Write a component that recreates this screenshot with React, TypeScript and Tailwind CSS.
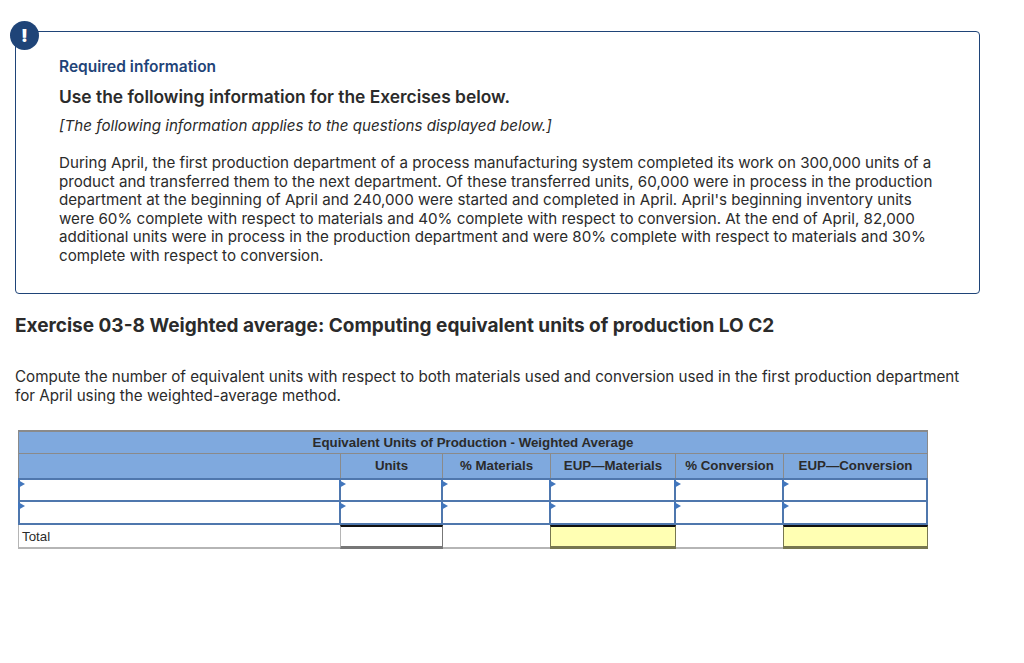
const cols = ["w-[323px]", "w-[102px]", "w-[108px]", "w-[125px]", "w-[108px]", "w-[144px]"];

function Marker() {
  return <span className="absolute left-[-2px] top-0 z-10 h-0 w-0 border-y-[4px] border-l-[7px] border-y-transparent border-l-[#4276bc]" />;
}

function InputRow({ first }: { first?: boolean }) {
  return (
    <div className={first ? "flex h-[24px]" : "flex h-[23px]"}>
      {cols.map((c, i) => (
        <div key={c} className={`${c} relative border-r-2 border-b-2 border-[#4f77ad] bg-white ${first ? "border-t-2" : ""} ${i === 0 ? "border-l-2" : ""}`}>
          <Marker />
        </div>
      ))}
    </div>
  );
}

const heads = ["", "Units", "% Materials", "EUP—Materials", "% Conversion", "EUP—Conversion"];

export default function App() {
  return (
    <div className="h-[663px] w-[1024px] overflow-hidden bg-white font-['Inter','Liberation_Sans',sans-serif] text-[#2b2b2b]">
      <div className="px-[15px] pt-[31px]">
        <div className="relative h-[263px] w-[965px] rounded-[4px] border border-[#1f4478] pl-[43px] pt-[25px]">
          <div className="absolute left-[-6px] top-[-11px] flex h-[29px] w-[29px] items-center justify-center rounded-full bg-[#1f4478] text-[18px] font-black text-white">!</div>
          <p className="text-[15.5px] leading-[20px] font-semibold text-[#1f4478]">Required information</p>
          <p className="mt-[10px] text-[17.4px] leading-[20px] font-semibold">Use the following information for the Exercises below.</p>
          <p className="mt-[9px] text-[15.15px] leading-[20px] italic">[The following information applies to the questions displayed below.]</p>
          <p className="mt-[18px] w-[890px] text-[15.15px] leading-[18.6px]">
            During April, the first production department of a process manufacturing system completed its work on 300,000 units of a product and transferred them to the next department. Of these transferred units, 60,000 were in process in the production department at the beginning of April and 240,000 were started and completed in April. April's beginning inventory units were 60% complete with respect to materials and 40% complete with respect to conversion. At the end of April, 82,000 additional units were in process in the production department and were 80% complete with respect to materials and 30% complete with respect to conversion.
          </p>
        </div>
        <h2 className="mt-[20px] text-[19px] leading-[24px] font-bold">Exercise 03-8 Weighted average: Computing equivalent units of production LO C2</h2>
        <p className="mt-[30px] w-[950px] text-[15.2px] leading-[18.6px]">
          Compute the number of equivalent units with respect to both materials used and conversion used in the first production department for April using the weighted-average method.
        </p>
      </div>
      <div className="ml-[18px] mt-[25px] w-[910px] font-['Liberation_Sans',sans-serif] text-[13.3px]">
        <div className="h-[24px] border border-t-2 border-[#8a8a8a] bg-[#7fa9de] text-center leading-[22px] font-bold">Equivalent Units of Production - Weighted Average</div>
        <div className="flex h-[24px]">
          {heads.map((h, i) => (
            <div key={i} className={`${cols[i]} border-r border-[#8a8a8a] bg-[#7fa9de] text-center leading-[23px] font-bold first:border-l`}>{h}</div>
          ))}
        </div>
        <InputRow first />
        <InputRow />
        <div className="flex h-[24px]">
          <div className="w-[322px] border-b-2 border-l border-[#b5b5b5] pl-[3px] leading-[23px]">Total</div>
          <div className="w-[103px] border-t-2 border-r border-b-[3px] border-l border-[#777] border-t-[#111] border-l-[#b5b5b5]" />
          <div className="w-[107px] border-b-2 border-[#b5b5b5]" />
          <div className="w-[126px] border-t-2 border-r border-b-[3px] border-l border-[#777750] border-t-[#111] bg-[#ffffb3]" />
          <div className="w-[107px] border-b-2 border-[#b5b5b5]" />
          <div className="w-[145px] border-t-2 border-r border-b-[3px] border-l border-[#777750] border-t-[#111] bg-[#ffffb3]" />
        </div>
      </div>
    </div>
  );
}
